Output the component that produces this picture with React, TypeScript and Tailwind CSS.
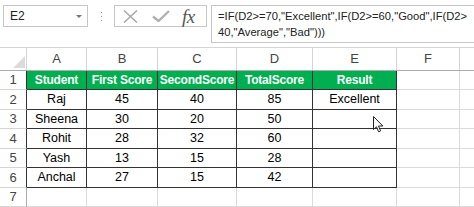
import React from 'react';

const COLS = [
  { key: 'A', w: 'w-[60px]' },
  { key: 'B', w: 'w-[71px]' },
  { key: 'C', w: 'w-[79px]' },
  { key: 'D', w: 'w-[76px]' },
  { key: 'E', w: 'w-[84px]' },
  { key: 'F', w: 'w-[63px]' },
  { key: '', w: 'w-[60px]' },
];

const ROWS: { h: string; cells: string[] }[] = [
  { h: 'h-[19px]', cells: ['Student', 'First Score', 'SecondScore', 'TotalScore', 'Result'] },
  { h: 'h-[20px]', cells: ['Raj', '45', '40', '85', 'Excellent'] },
  { h: 'h-[19px]', cells: ['Sheena', '30', '20', '50', ''] },
  { h: 'h-[20px]', cells: ['Rohit', '28', '32', '60', ''] },
  { h: 'h-[19px]', cells: ['Yash', '13', '15', '28', ''] },
  { h: 'h-[20px]', cells: ['Anchal', '27', '15', '42', ''] },
  { h: 'h-[19px]', cells: [] },
];

function Cursor() {
  return (
    <svg className="absolute left-[373px] top-[116px]" width="11" height="17" viewBox="0 0 11 17">
      <path
        d="M0.5 0.5 L0.5 13.5 L3.5 10.8 L5.6 15.8 L7.6 14.9 L5.5 10 L9.8 10 Z"
        fill="#fff"
        stroke="#222"
        strokeWidth="1"
        strokeLinejoin="round"
      />
    </svg>
  );
}

export default function App() {
  return (
    <div
      className="relative w-[474px] h-[207px] overflow-hidden bg-white text-[12.5px] text-black"
      style={{ fontFamily: '"Liberation Sans", Arial, sans-serif' }}
    >
      {/* formula bar */}
      <div className="flex items-start h-[48px] pt-[5px] pl-[3px] border-b border-[#d4d4d4]">
        <div className="shrink-0 flex items-center justify-between w-[85px] h-[22px] border border-[#c6c6c6] pl-[6px] pr-[5px] text-[12px] text-[#222]">
          <span>E2</span>
          <span className="w-0 h-0 border-l-[3px] border-r-[3px] border-t-[3px] border-l-transparent border-r-transparent border-t-[#777]" />
        </div>
        <div className="shrink-0 flex flex-col gap-[3px] ml-[13px] mr-[12px] mt-[7px]">
          <span className="w-[1px] h-[1px] bg-[#999]" />
          <span className="w-[1px] h-[1px] bg-[#999]" />
          <span className="w-[1px] h-[1px] bg-[#999]" />
        </div>
        <div className="shrink-0 flex items-center w-[93px] h-[22px] border border-[#c6c6c6]">
          <svg className="ml-[8px]" width="15" height="13" viewBox="0 0 15 13">
            <path d="M1 0.5 L14 12.5 M14 0.5 L1 12.5" stroke="#a8a8a8" strokeWidth="1.5" />
          </svg>
          <svg className="ml-[14px]" width="18" height="12" viewBox="0 0 18 12">
            <path d="M1 6.5 L6.5 11 L17 1" fill="none" stroke="#b0b0b0" strokeWidth="2.4" />
          </svg>
          <span
            className="ml-[12px] italic text-[19px] leading-none text-[#555] tracking-[-0.5px]"
            style={{ fontFamily: '"Liberation Serif", "Times New Roman", serif' }}
          >
            fx
          </span>
        </div>
        <div className="flex-1 min-w-0 ml-[4px] h-[38px] border-l border-t border-b border-[#c6c6c6] pl-[6px] pt-[2px] leading-[16px] text-[11.2px] text-[#222] whitespace-pre overflow-hidden">
          <div>=IF(D2&gt;=70,"Excellent",IF(D2&gt;=60,"Good",IF(D2&gt;</div>
          <div>40,"Average","Bad")))</div>
        </div>
      </div>

      {/* column headers */}
      <div className="flex h-[23px] border-b border-[#ababab] text-[13px] text-[#444]">
        <div className="relative shrink-0 w-[27px] border-r border-[#d4d4d4]">
          <svg className="absolute left-[13px] top-[8px]" width="12" height="12" viewBox="0 0 12 12">
            <path d="M12 0 L12 12 L0 12 Z" fill="#dcdcdc" />
          </svg>
        </div>
        {COLS.map((c, i) => (
          <div key={i} className={`${c.w} shrink-0 flex items-center justify-center border-r border-[#d4d4d4]`}>
            {c.key}
          </div>
        ))}
      </div>

      {/* rows */}
      {ROWS.map((row, ri) => {
        const inTable = ri < 6;
        return (
          <div key={ri} className={`flex ${row.h}`}>
            <div
              className={`w-[27px] shrink-0 flex items-center justify-center text-[13px] text-[#444] border-b border-[#d4d4d4] border-r ${
                inTable ? 'border-r-[#333]' : 'border-r-[#ababab]'
              }`}
            >
              {ri + 1}
            </div>
            {COLS.map((c, ci) => {
              const tableCell = inTable && ci < 5;
              const header = ri === 0 && ci < 5;
              return (
                <div
                  key={ci}
                  className={`${c.w} shrink-0 flex items-center justify-center whitespace-nowrap border-b border-r ${
                    tableCell ? 'border-[#333]' : 'border-[#dadada]'
                  } ${header ? 'bg-[#00b050] text-white font-bold text-[12px] tracking-[-0.2px]' : ''}`}
                >
                  {tableCell ? row.cells[ci] : ''}
                </div>
              );
            })}
          </div>
        );
      })}

      <Cursor />
    </div>
  );
}
